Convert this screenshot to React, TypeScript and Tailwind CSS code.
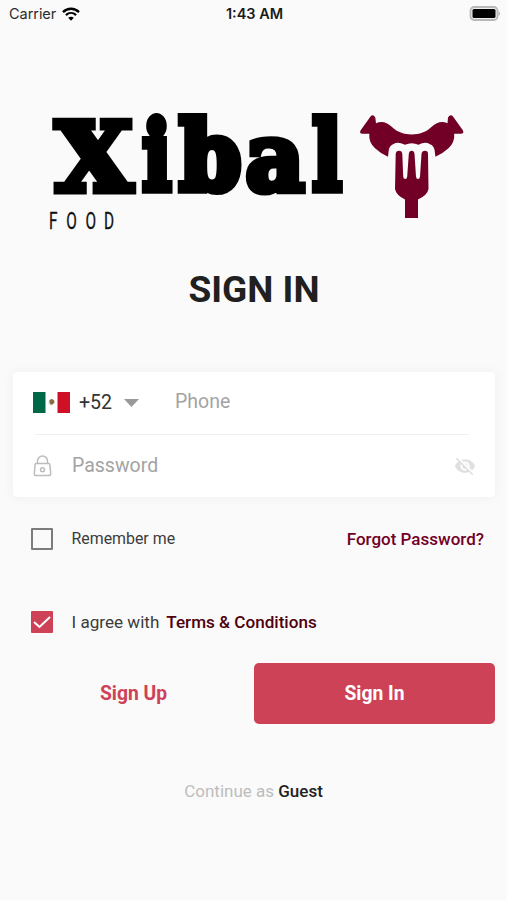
import React, { useState } from "react";
import { MdVisibilityOff } from "react-icons/md";

function StatusBar() {
	return (
		<div className="grid h-7 grid-cols-3 items-center pr-[7px] pl-[9px] font-['Inter',sans-serif] text-[14.5px] leading-none text-[#2b2b2b]">
			<div className="flex items-center gap-[6px]">
				<span className="tracking-[-0.05px]">Carrier</span>
				<svg className="mb-px" width="18" height="14" viewBox="0 0 18 14" fill="none">
					<path d="M1 5.1C5.6.7 12.4.7 17 5.1" stroke="#000" strokeWidth="2.4" />
					<path d="M3.9 8.1c3-2.8 7.2-2.8 10.2 0" stroke="#000" strokeWidth="2.2" />
					<path d="M9 13.7 6.2 10.8c1.6-1.5 4-1.5 5.6 0Z" fill="#000" />
				</svg>
			</div>
			<span className="text-center font-semibold text-[#1a1a1a]">1:43 AM</span>
			<svg className="mb-px justify-self-end" width="31" height="15" viewBox="0 0 31 15">
				<rect x="1.500" y="1" width="27" height="13" rx="3.5" fill="#eee" stroke="#b8b8b8" strokeWidth="1.8" />
				<rect x="3.500" y="3" width="23" height="9" rx="1.5" fill="#000" />
				<path d="M29.500 5.2c2 .7 2 3.9 0 4.6Z" fill="#b8b8b8" />
			</svg>
		</div>
	);
}

const letters = [
	{ char: "X", stroke: 7, transform: "translate(55.5 190.500) scale(1.08 1.03)" },
	{ char: "i", stroke: 8, transform: "translate(142.6 190) scale(.82 1.03)" },
	{ char: "b", stroke: 8, transform: "translate(179.5 190) scale(.96 1.03)" },
	{ char: "a", stroke: 7, transform: "translate(245.5 190.500) scale(.99 1.03)" },
	{ char: "l", stroke: 8, transform: "translate(312.6 190) scale(.83 1.03)" },
];

function Logo() {
	return (
		<svg width="507" height="140" viewBox="0 100 507 140">
			<g fontFamily="DejaVu Serif, serif" fontWeight="700" fontSize="92" stroke="#000">
				{letters.map((letter) => (
					<text key={letter.char} transform={letter.transform} strokeWidth={letter.stroke}>
						{letter.char}
					</text>
				))}
			</g>
			<text
				transform="translate(49 229) scale(.64 1)"
				x="0 27 57 86"
				y="0"
				fontFamily="Roboto, sans-serif"
				fontSize="24"
				fill="#111"
				stroke="#111"
				strokeWidth=".3"
			>
				FOOD
			</text>
			<g fill="#720026">
				<path d="M360.500 130.500 370.500 116.500Q373 113.500 375.300 117.500L376 123.300Q384 119.500 391.700 126.700C402 137 421.500 137 431.700 126.700Q439.500 119.500 447.500 123.300L448 117.500Q450.500 113.500 453 116.500L463 130.500Q464.500 134 460 133.700L454.200 133.700Q455 142 448.500 148.300 443 153.500 435.400 156.700L434.600 150Q433.500 145.500 430 144.300 426.500 142 422 143.300L418.500 144.800Q411.700 141.500 405 144.800L401 143.300Q397 142 393 144.300 389.500 146 388.800 150L388 156.700Q380.500 153.500 375 148.300 368.500 142 369.300 133.700L363 133.700Q359 134 360.500 130.500Z" />
				<path d="M395.700 154Q396 150.700 399 150.700T402.300 154L403.200 176.500Q403.500 179 405.200 179T407.200 176.500L408.800 154Q409.300 150.700 411.700 150.700T414.500 154L416 176.500Q416.300 179 418 179T420 176.500L421.500 154Q422 150.700 425 150.700T428 154L428.500 189Q427.500 195 418 199.500V218H405V199.500Q396 195 395 189Z" />
			</g>
		</svg>
	);
}

function MexicoFlag() {
	return (
		<svg width="38" height="21" viewBox="0 0 38 21">
			<path fill="#fff" d="M0 0h37v21H0z" />
			<path fill="#006847" d="M0 0h12.500v21H0z" />
			<path fill="#ce1126" d="M24.500 0H37v21H24.500z" />
			<path d="M16 9q2.500-4 5.500 0-.5 4.500-4 3.500Z" fill="#8a6a48" />
			<path d="M15.500 10.500q2.500 5 6.300 0" stroke="#c3cbb0" fill="none" />
		</svg>
	);
}

function LockIcon() {
	return (
		<svg width="20" height="22" viewBox="0 0 20 22" fill="none" stroke="#bcbcbc" strokeWidth="1.5">
			<path d="M3.200 8.500h12.600q1 0 1.100 1l.8 9.500q0 1.500-1.500 1.500H2.800q-1.500 0-1.500-1.500l.8-9.500q.1-1 1.100-1Z" />
			<path d="M4.500 8.500V6a5 5 0 0 1 10 0v2.500" />
			<circle cx="9.500" cy="14.700" r="2" />
		</svg>
	);
}

type checkBoxProps = {
	checked: boolean;
	onChange: () => void;
};

function CheckBox({ checked, onChange }: checkBoxProps) {
	return (
		<button type="button" role="checkbox" aria-checked={checked} onClick={onChange} className="h-[22px] w-[22px]">
			{checked ? (
				<svg width="22" height="22" viewBox="0 0 22 22" fill="none">
					<rect width="22" height="22" rx="1" fill="#ce4257" />
					<path d="m3 11 5.500 5L19 6" stroke="#fff" strokeWidth="2" />
				</svg>
			) : (
				<div className="h-[22px] w-[22px] rounded-[1px] border-2 border-[#7c7c7c]" />
			)}
		</button>
	);
}

export default function App() {
	const [remember, setRemember] = useState(false);
	const [agree, setAgree] = useState(true);

	return (
		<div className="flex h-[900px] w-[507px] flex-col overflow-hidden bg-[#fafafa] font-['Roboto',sans-serif] text-[#3c3c3c]">
			<StatusBar />
			<div className="mt-[72px] h-[140px]">
				<Logo />
			</div>
			<h1 className="mt-[27px] pl-px text-center text-[37px] leading-[46px] font-bold text-[#202020]">SIGN IN</h1>

			<div className="mt-[59px] mr-3 ml-[13px] h-[125px] rounded-[4px] bg-white shadow-[0_0_10px_2px_rgba(0,0,0,0.035)]">
				<div className="flex h-[62px] items-center pl-[19.5px]">
					<span className="pb-px">
						<MexicoFlag />
					</span>
					<span className="ml-[8.5px] text-[19.5px] text-[#333]">+52</span>
					<svg className="ml-3" width="15" height="8" viewBox="0 0 15 8">
						<path d="M0 0h15L7.500 8Z" fill="#999" />
					</svg>
					<span className="ml-9 pb-[3px] text-[19.5px] text-[#a3a3a3]">Phone</span>
				</div>
				<div className="mr-[26px] ml-[22px] h-px bg-[#efefef]" />
				<div className="flex h-[62px] items-center pr-[19px] pl-5">
					<LockIcon />
					<span className="ml-[19px] pb-px text-[19.5px] text-[#a3a3a3]">Password</span>
					<MdVisibilityOff className="ml-auto text-[#e0e0e0]" size={22} />
				</div>
			</div>

			<div className="mt-[31px] flex h-[22px] items-center pr-[23px] pl-[31px] text-[17px]">
				<CheckBox checked={remember} onChange={() => setRemember(!remember)} />
				<span className="ml-[18.5px] text-[15.9px]">Remember me</span>
				<span className="ml-auto pt-[2px] font-medium text-[#720026]">Forgot Password?</span>
			</div>
			<div className="mt-[61px] flex h-[22px] items-center pl-[31px] text-[17.1px]">
				<CheckBox checked={agree} onChange={() => setAgree(!agree)} />
				<span className="ml-[18.5px] pt-px">I agree with</span>
				<span className="ml-[7px] pt-px font-medium text-[#4f000b]">Terms &amp; Conditions</span>
			</div>

			<div className="mt-[30px] flex h-[61px] pr-3 pl-[13px] text-[19.3px] font-bold">
				<button className="w-[241px] pt-[2px] text-[#ce4257]">Sign Up</button>
				<button className="w-[241px] rounded-[5px] bg-[#ce4257] pt-[2px] text-white">Sign In</button>
			</div>

			<p className="mt-[55px] text-center text-[17px] leading-6 text-[#bdbdbd]">
				Continue as <span className="font-medium text-[#222]">Guest</span>
			</p>
		</div>
	);
}
